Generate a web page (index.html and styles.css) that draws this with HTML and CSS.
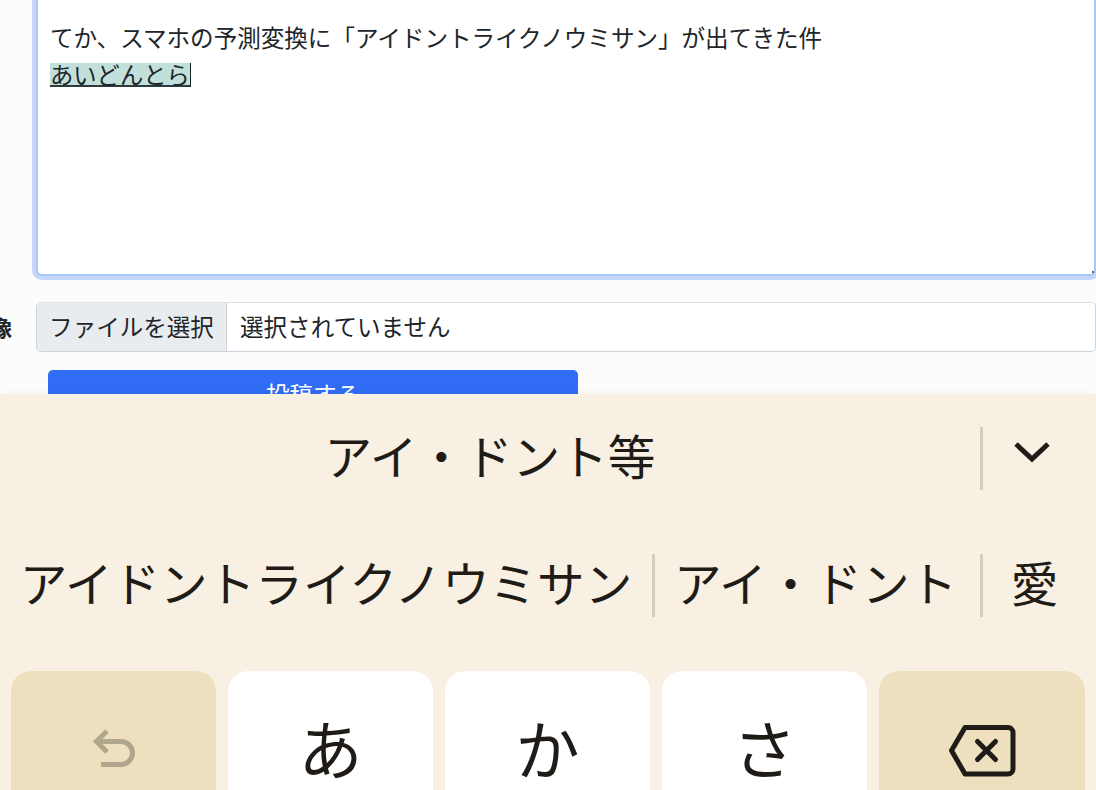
FILE: index.html
```html
<!DOCTYPE html>
<html lang="ja">
<head>
<meta charset="utf-8">
<title>投稿</title>
<link rel="stylesheet" href="styles.css">
</head>
<body>
<main class="page">
  <div class="editor">
    <div class="line">てか、スマホの予測変換に「アイドントライクノウミサン」が出てきた件</div>
    <div class="line"><span class="composing">あいどんとら</span></div>
    <span class="grip"></span>
  </div>
  <div class="file-row">
    <div class="label">画像</div>
    <div class="file">
      <div class="file-btn">ファイルを選択</div>
      <div class="file-name">選択されていません</div>
    </div>
  </div>
  <button class="submit">投稿する</button>
</main>
<section class="keyboard">
  <div class="cands">
    <div class="cand cand-main">アイ・ドント等</div>
    <div class="sep"></div>
    <div class="cand cand-more">
      <svg class="chevron" width="36" height="22" viewBox="0 0 36 22"><path d="M2 3 L18 18 L34 3" fill="none" stroke="#1f1b16" stroke-width="5"/></svg>
    </div>
  </div>
  <div class="cands cands-second">
    <div class="cand cand-a">アイドントライクノウミサン</div>
    <div class="sep"></div>
    <div class="cand cand-b">アイ・ドント</div>
    <div class="sep"></div>
    <div class="cand cand-c">愛</div>
  </div>
  <div class="keys">
    <div class="key key-fn">
      <svg class="icon-undo" width="44" height="40" viewBox="0 0 44 40"><path d="M15 3 L4.5 13.5 L15 24 M5 13.5 H29 A11.5 11.5 0 0 1 29 36.5 H9" fill="none" stroke="#b0a58d" stroke-width="5"/></svg>
    </div>
    <div class="key">あ</div>
    <div class="key">か</div>
    <div class="key">さ</div>
    <div class="key key-fn key-last">
      <svg class="icon-back" width="68" height="54" viewBox="0 0 68 54"><path d="M17 3.5 H60 A5 5 0 0 1 65 8.5 V45 A5 5 0 0 1 60 50 H17 L3.5 26.5 Z" fill="none" stroke="#1f1b16" stroke-width="5" stroke-linejoin="round"/><path d="M29.5 17.5 L47.5 35.5 M47.5 17.5 L29.5 35.5" fill="none" stroke="#1f1b16" stroke-width="5" stroke-linecap="round"/></svg>
    </div>
  </div>
</section>
</body>
</html>
```
FILE: styles.css
```css
* { box-sizing: border-box; }
html, body { margin: 0; height: 790px; overflow: hidden; }
body {
  display: flex;
  flex-direction: column;
  font-family: "Noto Sans CJK JP", "Liberation Sans", sans-serif;
  color: #212529;
  background: #fcfcfa;
}
.page {
  height: 394px;
  flex: none;
  overflow: hidden;
  padding-left: 36px;
}
.editor {
  position: relative;
  margin-top: -10px;
  height: 286px;
  width: 1060px;
  padding: 27px 12px 0;
  background: #fff;
  border: 2px solid #a9c7f7;
  border-radius: 6px;
  box-shadow: 0 0 0 4px #c4d7fb;
  font-size: 23.55px;
  line-height: 36px;
}
.line { height: 36px; white-space: nowrap; }
.composing {
  display: inline-block;
  height: 24px;
  line-height: 22px;
  vertical-align: top;
  margin-top: 8px;
  font-size: 23.3px;
  background: #c1e0dc;
  border-bottom: 2px solid #2c3a3a;
  border-right: 1.5px solid #1c2424;
}
.grip {
  position: absolute;
  right: 0;
  bottom: 1px;
  width: 2px;
  height: 2px;
  background: #666;
}
.file-row {
  display: flex;
  margin-top: 26px;
  margin-left: -36px;
  height: 50px;
}
.label {
  flex: none;
  width: 36px;
  padding-right: 24px;
  padding-bottom: 3px;
  display: flex;
  justify-content: flex-end;
  align-items: center;
  white-space: nowrap;
  font-weight: 700;
  font-size: 22px;
}
.file {
  flex: 1;
  display: flex;
  background: #fff;
  border: 1.5px solid #ced4da;
  border-top-color: #dee2e6;
  border-radius: 5px;
  font-size: 23.55px;
  overflow: hidden;
}
.file-btn {
  flex: none;
  width: 190px;
  padding-bottom: 3px;
  background: #e9ecef;
  border-right: 1.5px solid #ced4da;
  display: flex;
  align-items: center;
  justify-content: center;
}
.file-name {
  display: flex;
  align-items: center;
  padding-left: 13px;
  padding-bottom: 3px;
}
.submit {
  display: block;
  margin: 18px 0 0 12px;
  width: 530px;
  height: 48px;
  padding: 0;
  border: 0;
  border-radius: 5px;
  background: #316cf4;
  color: #fff;
  font-family: inherit;
  font-size: 23.55px;
}
.keyboard {
  flex: 1;
  background: #f7f0e3;
  color: #1f1b16;
  padding-top: 33px;
  box-shadow: 0 0 12px rgba(0, 0, 0, .04);
  z-index: 1;
  font-size: 47.6px;
}
.cands { display: flex; height: 63px; }
.cands-second { margin-top: 64px; }
.cand {
  display: flex;
  align-items: center;
  justify-content: center;
  white-space: nowrap;
  line-height: 1;
  padding-bottom: 8px;
}
.sep { flex: none; width: 3px; background: #d6cdc0; }
.cand-main { width: 980px; }
.cand-more { flex: 1; padding: 0 16px 13px 0; }
.cand-a { width: 652px; }
.cand-b { width: 325px; padding-right: 4px; }
.cand-c { flex: 1; padding-right: 10px; }
.keys {
  display: flex;
  gap: 12px;
  margin-top: 54px;
  padding-left: 11px;
}
.key {
  flex: none;
  width: 205px;
  height: 150px;
  background: #fff;
  border-radius: 20px;
  display: flex;
  align-items: center;
  justify-content: center;
  font-size: 64px;
  line-height: 1;
}
.key-fn { background: #eee0bf; }
.key-last { width: 206px; }
.icon-undo { margin: 4px 0 0 0; }
.icon-back { margin-top: 10px; }
```
